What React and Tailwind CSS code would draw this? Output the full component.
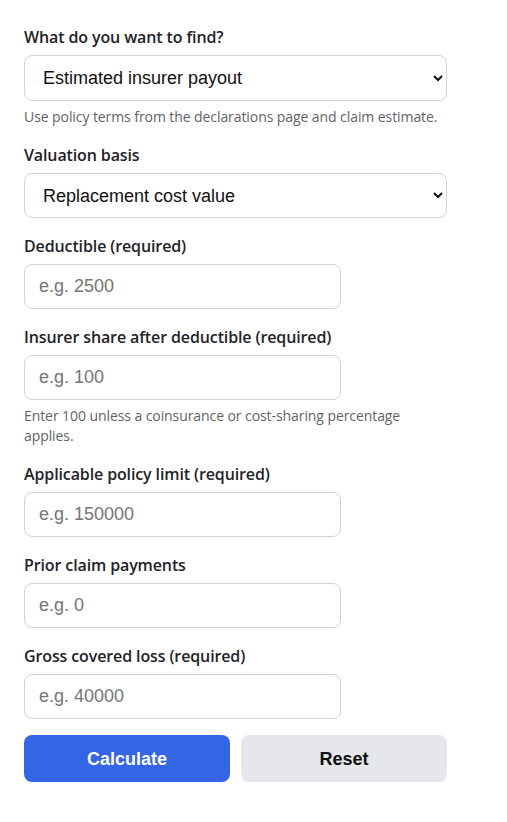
import { useState } from 'react';

const fields = [
  { id: 'deductible', label: 'Deductible (required)', placeholder: 'e.g. 2500' },
  {
    id: 'share',
    label: 'Insurer share after deductible (required)',
    placeholder: 'e.g. 100',
    help: 'Enter 100 unless a coinsurance or cost-sharing percentage applies.',
  },
  { id: 'limit', label: 'Applicable policy limit (required)', placeholder: 'e.g. 150000' },
  { id: 'prior', label: 'Prior claim payments', placeholder: 'e.g. 0' },
  { id: 'loss', label: 'Gross covered loss (required)', placeholder: 'e.g. 40000' },
];

const labelCls =
  "block mb-1.5 text-base leading-6 tracking-[-0.12px] font-semibold text-[#1f2328] font-['Open_Sans',sans-serif]";
const helpCls = "mt-1.5 text-sm leading-5 tracking-[-0.08px] text-[#5f6368] font-['Open_Sans',sans-serif]";
const boxCls =
  "rounded-lg border border-[#d0d3d9] bg-white text-lg text-[#111] font-['Liberation_Sans',Arial,sans-serif] outline-none";

export default function App() {
  const [values, setValues] = useState({});

  return (
    <div className="bg-white min-h-screen w-[507px] px-6 pt-[25px]">
      <div className="w-[423px] flex flex-col gap-4">
        <div>
          <label className={labelCls}>What do you want to find?</label>
          <select className={`${boxCls} h-[46px] w-full px-3.5`} defaultValue="payout">
            <option value="payout">Estimated insurer payout</option>
            <option value="net">Net claim after deductible</option>
          </select>
          <p className={helpCls}>Use policy terms from the declarations page and claim estimate.</p>
        </div>

        <div>
          <label className={labelCls}>Valuation basis</label>
          <select className={`${boxCls} h-[45px] w-full px-3.5`} defaultValue="rcv">
            <option value="rcv">Replacement cost value</option>
            <option value="acv">Actual cash value</option>
          </select>
        </div>

        {fields.map((f) => (
          <div key={f.id}>
            <label className={labelCls}>{f.label}</label>
            <input
              type="text"
              placeholder={f.placeholder}
              value={values[f.id] || ''}
              onChange={(e) => setValues({ ...values, [f.id]: e.target.value })}
              className={`${boxCls} h-[45px] w-[317px] px-3.5 placeholder:text-[#757575]`}
            />
            {f.help && <p className={`${helpCls} pr-8`}>{f.help}</p>}
          </div>
        ))}

        <div className="grid grid-cols-2 gap-[11px]">
          <button className="h-[47px] rounded-lg bg-[#3465e4] text-white text-lg font-bold font-['Liberation_Sans',Arial,sans-serif]">
            Calculate
          </button>
          <button
            onClick={() => setValues({})}
            className="h-[47px] rounded-lg bg-[#e5e7eb] text-[#111] text-lg font-bold font-['Liberation_Sans',Arial,sans-serif]"
          >
            Reset
          </button>
        </div>
      </div>
    </div>
  );
}
